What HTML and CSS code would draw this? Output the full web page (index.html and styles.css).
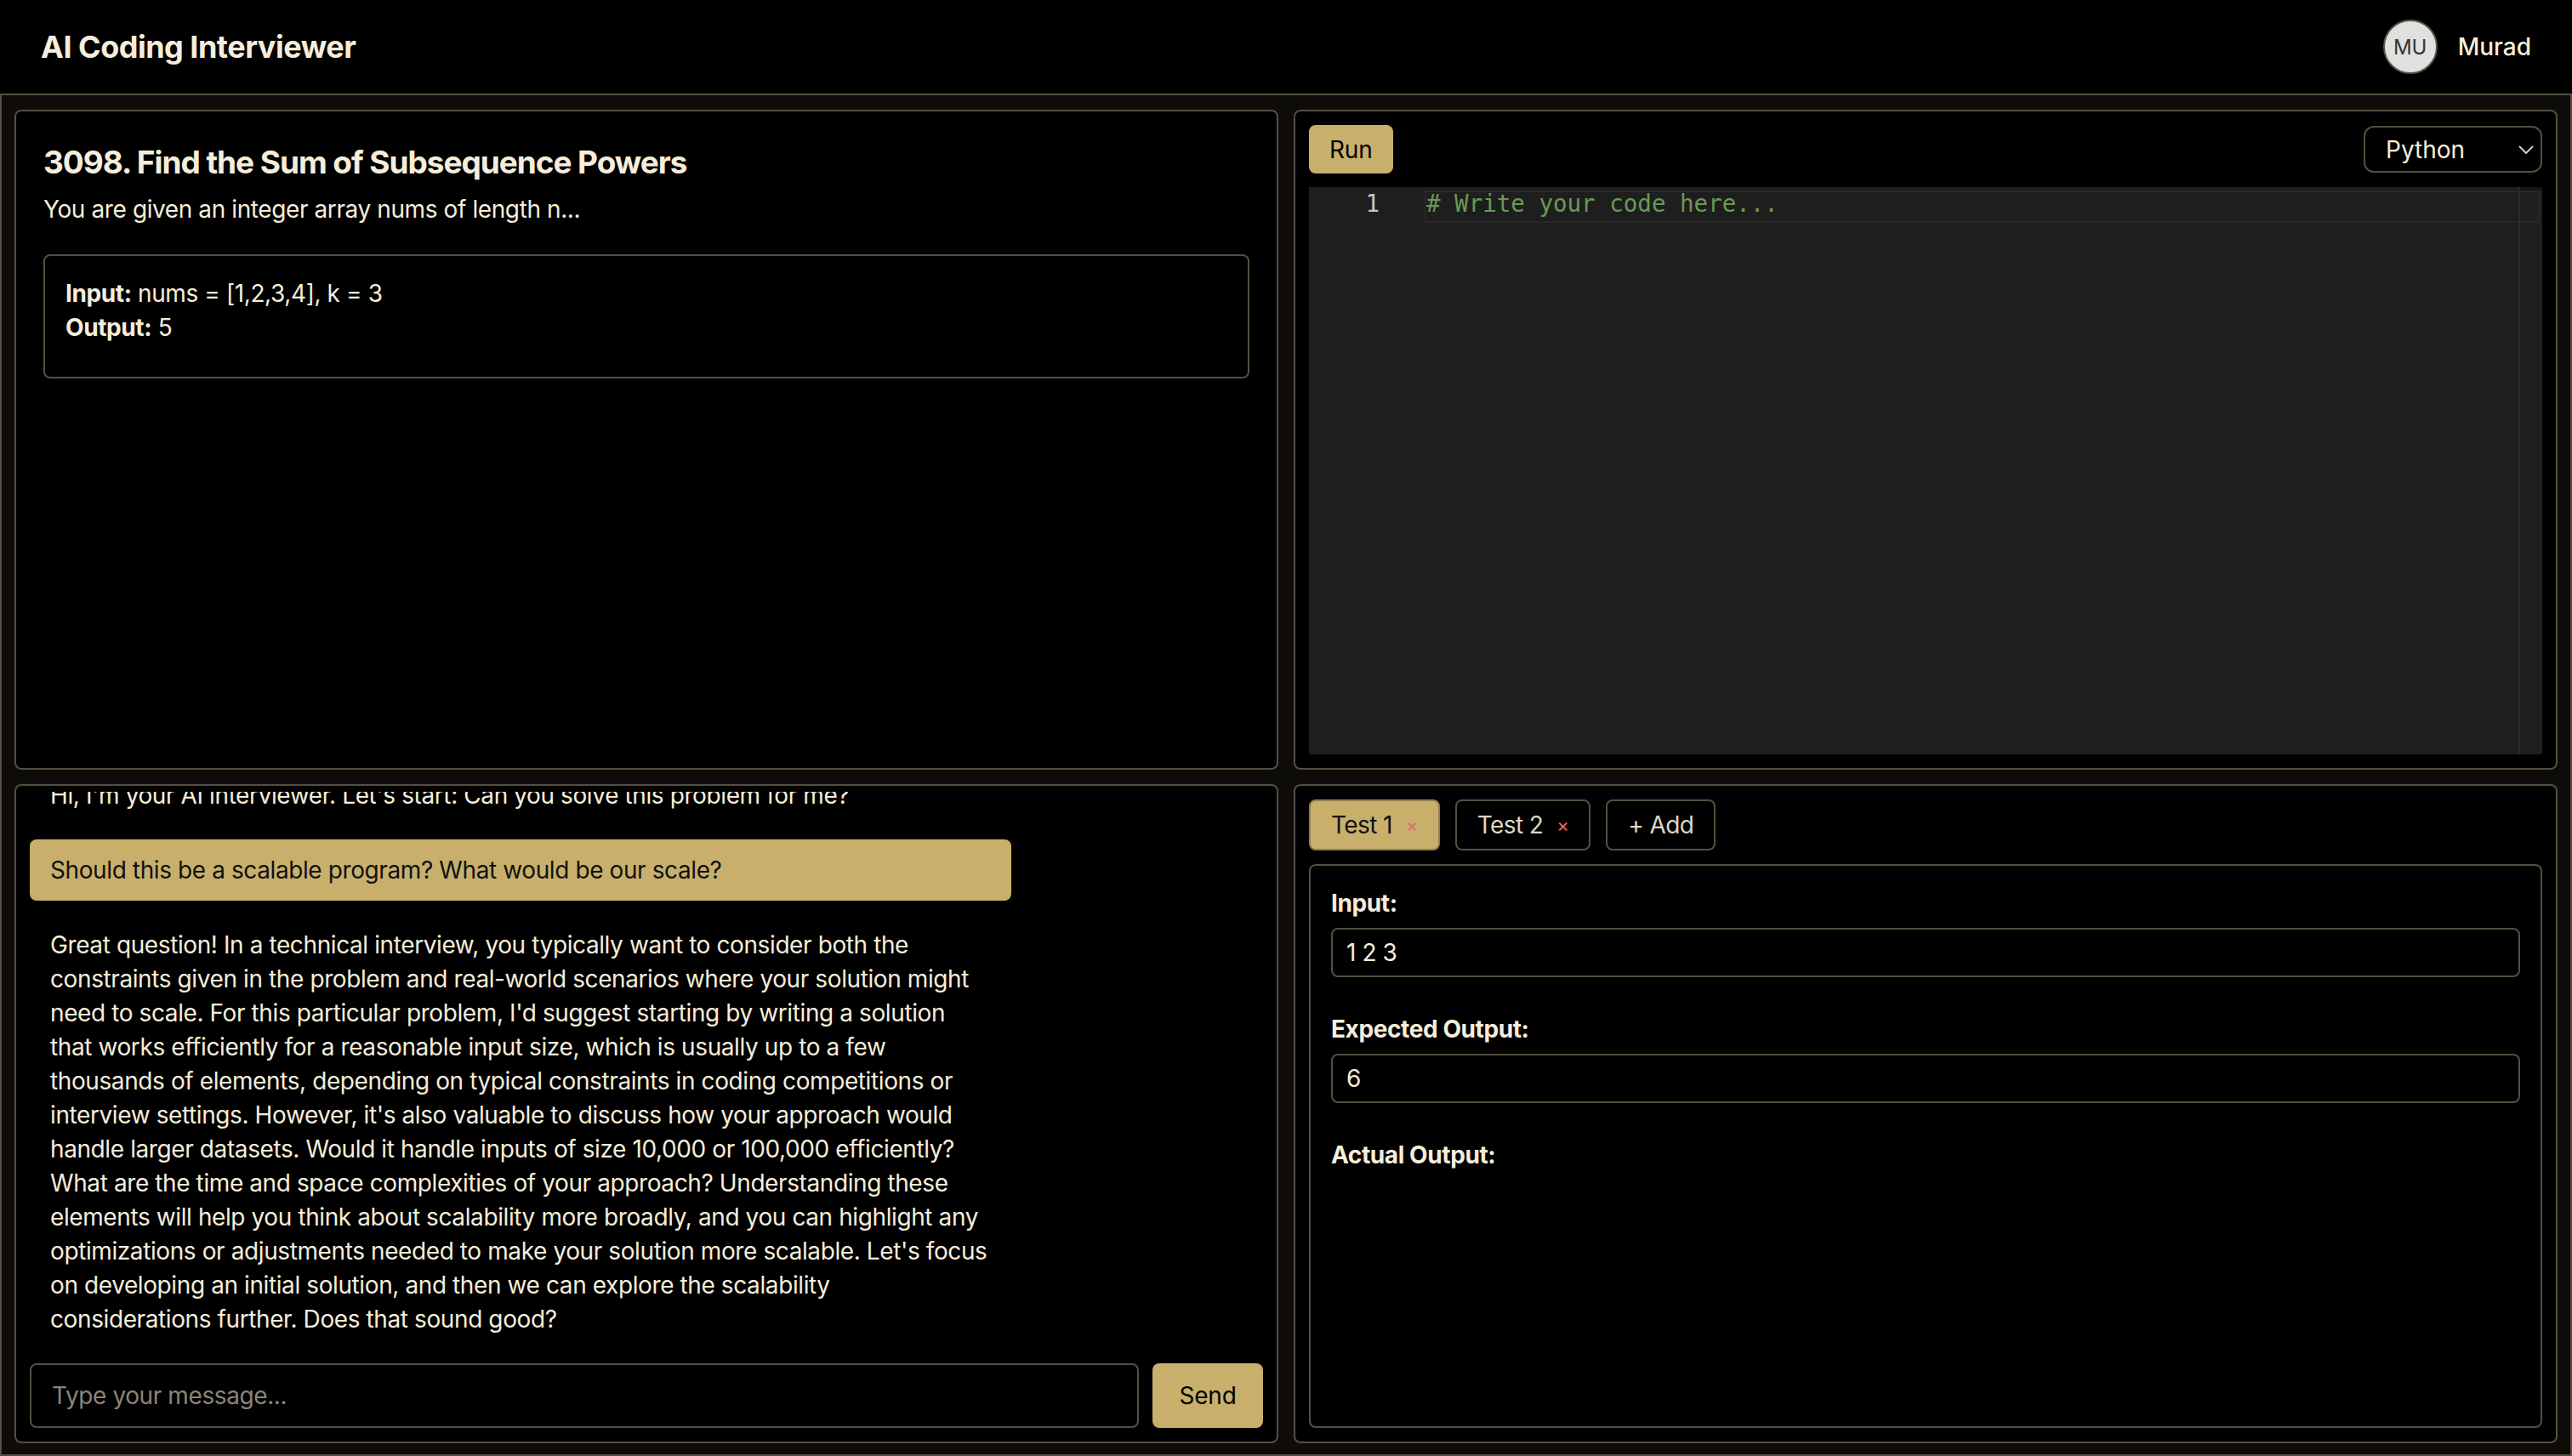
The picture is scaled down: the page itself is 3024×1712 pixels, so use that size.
FILE: index.html
```html
<!DOCTYPE html>
<html lang="en">
<head>
<meta charset="utf-8">
<title>AI Coding Interviewer</title>
<link rel="stylesheet" href="styles.css">
</head>
<body>
<header class="topbar">
  <div class="brand">AI Coding Interviewer</div>
  <div class="user">
    <div class="avatar">MU</div>
    <span class="user-name">Murad</span>
  </div>
</header>
<main class="workspace">
  <section class="panel problem">
    <h1 class="problem-title">3098. Find the Sum of Subsequence Powers</h1>
    <p class="problem-desc">You are given an integer array nums of length n...</p>
    <div class="example">
      <div><b>Input:</b> nums = [1,2,3,4], k = 3</div>
      <div><b>Output:</b> 5</div>
    </div>
  </section>

  <section class="panel editor-panel">
    <div class="toolbar">
      <button class="btn-gold run-btn">Run</button>
      <div class="lang-select">
        <span>Python</span>
        <svg class="chevron" width="18" height="10" viewBox="0 0 18 10"><path d="M1 1 L9 9 L17 1" fill="none" stroke="#d8d1bf" stroke-width="2"/></svg>
      </div>
    </div>
    <div class="editor">
      <div class="gutter"><div class="line-no">1</div></div>
      <div class="code">
        <div class="code-line current"><span class="cm"># Write your code here...</span></div>
      </div>
      <div class="overview-ruler"></div>
    </div>
  </section>

  <section class="panel chat">
    <div class="messages">
      <div class="msg ai">Hi, I'm your AI interviewer. Let's start: Can you solve this problem for me?</div>
      <div class="msg user">Should this be a scalable program? What would be our scale?</div>
      <div class="msg ai">Great question! In a technical interview, you typically want to consider both the constraints given in the problem and real-world scenarios where your solution might need to scale. For this particular problem, I'd suggest starting by writing a solution that works efficiently for a reasonable input size, which is usually up to a few thousands of elements, depending on typical constraints in coding competitions or interview settings. However, it's also valuable to discuss how your approach would handle larger datasets. Would it handle inputs of size 10,000 or 100,000 efficiently? What are the time and space complexities of your approach? Understanding these elements will help you think about scalability more broadly, and you can highlight any optimizations or adjustments needed to make your solution more scalable. Let's focus on developing an initial solution, and then we can explore the scalability considerations further. Does that sound good?</div>
    </div>
    <div class="composer">
      <input class="chat-input" type="text" placeholder="Type your message...">
      <button class="btn-gold send-btn">Send</button>
    </div>
  </section>

  <section class="panel tests">
    <div class="tabs">
      <div class="tab active">Test 1<span class="tab-x">×</span></div>
      <div class="tab">Test 2<span class="tab-x">×</span></div>
      <div class="tab">+ Add</div>
    </div>
    <div class="test-box">
      <div class="field">
        <div class="field-label">Input:</div>
        <div class="field-input">1 2 3</div>
      </div>
      <div class="field">
        <div class="field-label">Expected Output:</div>
        <div class="field-input">6</div>
      </div>
      <div class="field">
        <div class="field-label">Actual Output:</div>
      </div>
    </div>
  </section>
</main>
</body>
</html>
```

FILE: styles.css
```css
html, body {
  margin: 0;
  padding: 0;
  height: 1712px;
  overflow: hidden;
  background: #000;
}

body {
  font-family: Inter, "Noto Sans", sans-serif;
  color: #f6eddb;
  letter-spacing: -0.4px;
}

.topbar {
  height: 110px;
  border-bottom: 2px solid #554f3f;
  background: #000;
  display: flex;
  align-items: center;
  justify-content: space-between;
  padding: 0 48px;
}

.brand {
  font-size: 36px;
  font-weight: 700;
  letter-spacing: -0.5px;
}

.user {
  display: flex;
  align-items: center;
  gap: 24px;
}

.avatar {
  width: 64px;
  height: 64px;
  box-sizing: border-box;
  border-radius: 50%;
  border: 2px solid #5c5442;
  background: #e0e0e0;
  color: #333;
  font-size: 24px;
  letter-spacing: 0;
  display: flex;
  align-items: center;
  justify-content: center;
}

.user-name {
  font-size: 28px;
  font-weight: 500;
  letter-spacing: 0;
}

.workspace {
  height: 1600px;
  box-sizing: border-box;
  border: 2px solid #554f3f;
  border-top: none;
  background: #0d0c09;
  padding: 17px 15px 13px;
  display: grid;
  grid-template-columns: 1fr 1fr;
  grid-template-rows: 1fr 1fr;
  column-gap: 18px;
  row-gap: 17px;
}

.panel {
  background: #000;
  border: 2px solid #554f3f;
  border-radius: 8px;
  box-sizing: border-box;
  min-height: 0;
  min-width: 0;
  overflow: hidden;
}

/* Problem */
.problem {
  padding: 32px;
}

.problem-title {
  margin: 0 0 7px;
  font-size: 37px;
  line-height: 56px;
  font-weight: 700;
  letter-spacing: -1.05px;
}

.problem-desc {
  margin: 0;
  font-size: 28px;
  line-height: 40px;
}

.example {
  margin-top: 33px;
  border: 2px solid #554f3f;
  border-radius: 8px;
  padding: 24px 24px 38px;
  font-size: 28px;
  line-height: 40px;
}

/* Editor */
.editor-panel {
  padding: 16px;
  display: flex;
  flex-direction: column;
  gap: 16px;
}

.toolbar {
  display: flex;
  justify-content: space-between;
  align-items: center;
}

.btn-gold {
  background: #c8b06c;
  color: #000;
  border: none;
  border-radius: 8px;
  font-family: Inter, "Noto Sans", sans-serif;
  font-size: 28px;
  letter-spacing: -0.2px;
}

.run-btn {
  height: 57px;
  padding: 0 24px;
}

.lang-select {
  width: 210px;
  height: 55px;
  box-sizing: border-box;
  border: 2px solid #554f3f;
  border-radius: 12px;
  padding: 0 8px 0 24px;
  display: flex;
  align-items: center;
  justify-content: space-between;
  font-size: 28px;
  letter-spacing: 0;
}

.editor {
  flex: 1;
  background: #1e1e1e;
  display: flex;
  position: relative;
  padding-top: 4px;
  font-family: "DejaVu Sans Mono", "Liberation Mono", monospace;
  font-size: 27.5px;
  letter-spacing: 0;
}

.gutter {
  width: 136px;
  flex: none;
}

.line-no {
  width: 83px;
  text-align: right;
  height: 38px;
  line-height: 31px;
  color: #c6c6c6;
}

.code {
  flex: 1;
  margin-right: 3px;
}

.code-line {
  height: 38px;
  line-height: 27px;
  box-sizing: border-box;
}

.code-line.current {
  border: 2px solid #282828;
}

.cm {
  color: #6a9955;
}

.overview-ruler {
  position: absolute;
  top: 0;
  right: 0;
  bottom: 0;
  width: 26px;
  border-left: 2px solid #2b2b2b;
  box-shadow: inset 0 4px 0 #151515;
}

/* Chat */
.chat {
  display: flex;
  flex-direction: column;
}

.messages {
  flex: 1;
  min-height: 0;
  margin-top: 7px;
  overflow: hidden;
  display: flex;
  flex-direction: column;
  justify-content: flex-end;
  gap: 16px;
  padding: 16px;
}

.msg {
  flex: none;
  width: 79.6%;
  box-sizing: border-box;
  padding: 16px 24px;
  border-radius: 8px;
  font-size: 28px;
  line-height: 40px;
}

.msg.user {
  background: #c8b06c;
  color: #111;
}

.composer {
  display: flex;
  gap: 16px;
  padding: 0 16px 16px;
}

.chat-input {
  flex: 1;
  height: 76px;
  box-sizing: border-box;
  border: 2px solid #554f3f;
  border-radius: 8px;
  background: #000;
  color: #f6eddb;
  padding: 0 24px;
  font-family: Inter, "Noto Sans", sans-serif;
  font-size: 28px;
  letter-spacing: -0.4px;
  outline: none;
}

.chat-input::placeholder {
  color: #8a8577;
}

.send-btn {
  width: 130px;
  height: 76px;
}

/* Tests */
.tests {
  padding: 16px;
  display: flex;
  flex-direction: column;
  gap: 16px;
}

.tabs {
  display: flex;
  gap: 18px;
}

.tab {
  height: 60px;
  box-sizing: border-box;
  padding: 0 24px;
  border: 2px solid #554f3f;
  border-radius: 8px;
  font-size: 28px;
  letter-spacing: -0.6px;
  display: flex;
  align-items: center;
  color: #ddd7c8;
}

.tab.active {
  background: #c8b06c;
  border-color: #8f7f4f;
  color: #111;
}

.tab-x {
  margin-left: 16px;
  color: #e06a68;
  font-size: 22px;
}

.test-box {
  flex: 1;
  border: 2px solid #554f3f;
  border-radius: 8px;
  padding: 24px;
}

.field {
  margin-bottom: 41px;
}

.field-label {
  font-size: 28px;
  line-height: 40px;
  font-weight: 700;
}

.field-input {
  margin-top: 9px;
  height: 58px;
  box-sizing: border-box;
  border: 2px solid #554f3f;
  border-radius: 8px;
  padding: 0 16px;
  font-size: 28px;
  display: flex;
  align-items: center;
}
```
